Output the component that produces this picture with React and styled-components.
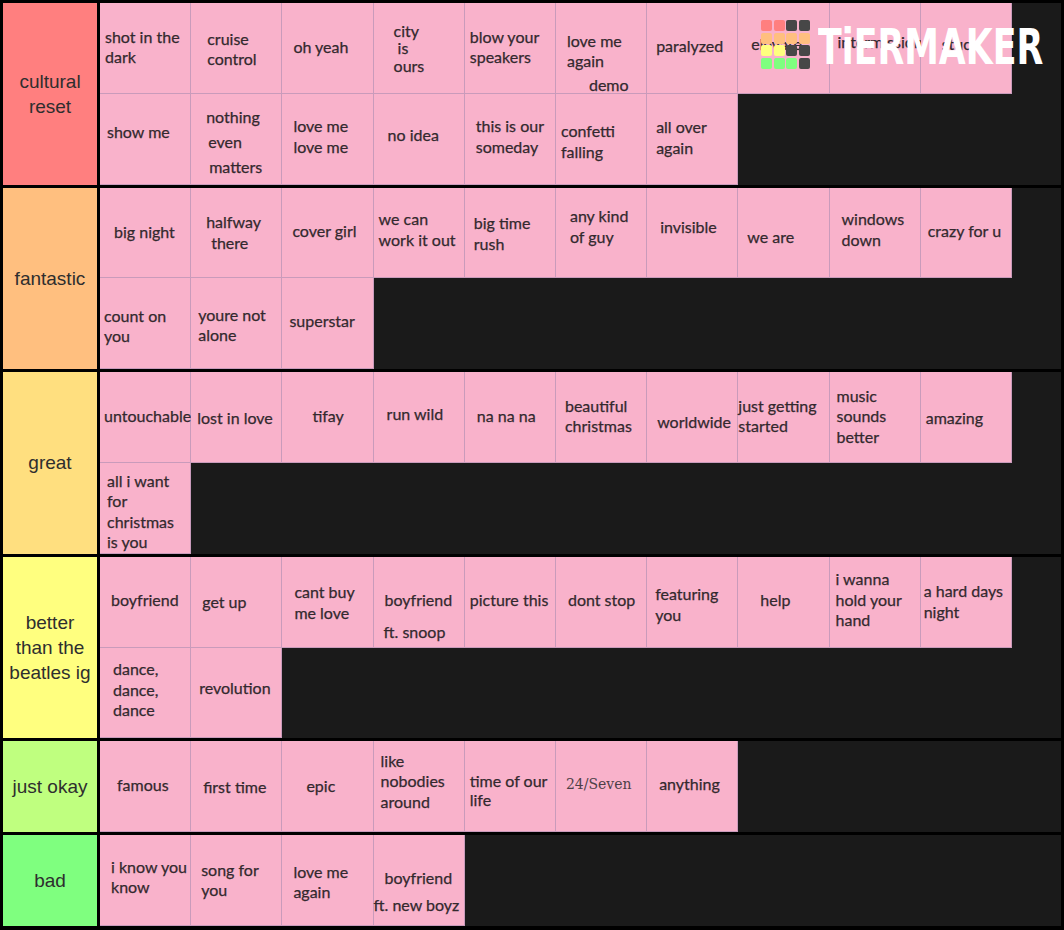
import React from 'react'
import styled, { createGlobalStyle } from 'styled-components'

const GlobalStyle = createGlobalStyle`
  html, body {
    margin: 0;
    padding: 0;
    background: #000;
    width: 1064px;
    height: 930px;
    overflow: hidden;
  }
`

const ROW_H = 90.8
const LH = 20.5
const BASE = 16.4

const tiers = [
  {
    label: 'cultural\nreset',
    color: '#ff7f7f',
    rows: 2,
    items: [
      { t: 'shot in the\ndark', x: 5, y: 40 },
      { t: 'cruise\ncontrol', x: 16, y: 42 },
      { t: 'oh yeah', x: 11, y: 50 },
      { t: 'city\nis\nours', x: 20, y: 35, lh: 17.5, ind: [0, 4, 0] },
      { t: 'blow your\nspeakers', x: 5, y: 40 },
      { t: 'love me\nagain\ndemo', x: 11, y: 44, ind: [0, 0, 22], gap: [0, 20, 24] },
      { t: 'paralyzed', x: 9, y: 49 },
      { t: 'elevate', x: 13, y: 47 },
      { t: 'intermission', x: 8, y: 45 },
      { t: 'stuck', x: 21, y: 47 },
      { t: 'show me', x: 7, y: 45 },
      { t: 'nothing\neven\nmatters', x: 15, y: 27, lh: 25, ind: [0, 2, 3] },
      { t: 'love me\nlove me', x: 11, y: 39 },
      { t: 'no idea', x: 14, y: 48 },
      { t: 'this is our\nsomeday', x: 11, y: 39 },
      { t: 'confetti\nfalling', x: 5, y: 44 },
      { t: 'all over\nagain', x: 9, y: 40 }
    ]
  },
  {
    label: 'fantastic',
    color: '#ffbf7f',
    rows: 2,
    items: [
      { t: 'big night', x: 14, y: 51 },
      { t: 'halfway\nthere', x: 15, y: 41, ind: [0, 5] },
      { t: 'cover girl', x: 10, y: 50 },
      { t: 'we can\nwork it out', x: 5, y: 38 },
      { t: 'big time\nrush', x: 9, y: 42 },
      { t: 'any kind\nof guy', x: 14, y: 35 },
      { t: 'invisible', x: 13, y: 46 },
      { t: 'we are', x: 9, y: 56 },
      { t: 'windows\ndown', x: 12, y: 38 },
      { t: 'crazy for u', x: 7, y: 50 },
      { t: 'count on\nyou', x: 4, y: 44 },
      { t: 'youre not\nalone', x: 7, y: 43 },
      { t: 'superstar', x: 7, y: 49 }
    ]
  },
  {
    label: 'great',
    color: '#ffdf7f',
    rows: 2,
    items: [
      { t: 'untouchable', x: 4, y: 50 },
      { t: 'lost in love', x: 6, y: 52 },
      { t: 'tifay', x: 30, y: 50 },
      { t: 'run wild', x: 13, y: 48 },
      { t: 'na na na', x: 12, y: 50 },
      { t: 'beautiful\nchristmas', x: 9, y: 40 },
      { t: 'worldwide', x: 10, y: 56 },
      { t: 'just getting\nstarted', x: 0, y: 40 },
      { t: 'music\nsounds\nbetter', x: 7, y: 30 },
      { t: 'amazing', x: 5, y: 52 },
      { t: 'all i want\nfor\nchristmas\nis you', x: 7, y: 24 }
    ]
  },
  {
    label: 'better\nthan the\nbeatles ig',
    color: '#ffff7f',
    rows: 2,
    items: [
      { t: 'boyfriend', x: 11, y: 50 },
      { t: 'get up', x: 11, y: 52 },
      { t: 'cant buy\nme love', x: 12, y: 42 },
      { t: 'boyfriend\nft. snoop', x: 11, y: 50, ind: [0, -1], gap: [0, 32] },
      { t: 'picture this', x: 5, y: 50 },
      { t: 'dont stop', x: 12, y: 50 },
      { t: 'featuring\nyou', x: 8, y: 44 },
      { t: 'help', x: 22, y: 50 },
      { t: 'i wanna\nhold your\nhand', x: 6, y: 29 },
      { t: 'a hard days\nnight', x: 3, y: 41 },
      { t: 'dance,\ndance,\ndance', x: 13, y: 28 },
      { t: 'revolution', x: 8, y: 47 }
    ]
  },
  {
    label: 'just okay',
    color: '#bfff7f',
    rows: 1,
    items: [
      { t: 'famous', x: 17, y: 50 },
      { t: 'first time', x: 12, y: 52 },
      { t: 'epic', x: 24, y: 51 },
      { t: 'like\nnobodies\naround', x: 7, y: 26 },
      { t: 'time of our\nlife', x: 5, y: 46, lh: 19 },
      { t: '24/Seven', x: 10, y: 48, serif: true },
      { t: 'anything', x: 12, y: 49 }
    ]
  },
  {
    label: 'bad',
    color: '#7fff7f',
    rows: 1,
    items: [
      { t: 'i know you\nknow', x: 11, y: 38 },
      { t: 'song for\nyou', x: 10, y: 41 },
      { t: 'love me\nagain', x: 11, y: 43 },
      { t: 'boyfriend\nft. new boyz', x: 11, y: 49, ind: [0, -11], gap: [0, 27] }
    ]
  }
]

const logoSquares = [
  '#ff7f7f', '#ff7f7f', '#474747', '#474747',
  '#ffbf7f', '#ffbf7f', '#ffbf7f', '#ffbf7f',
  '#ffff7f', '#ffff7f', '#474747', '#474747',
  '#7fff7f', '#7fff7f', '#7fff7f', '#474747'
]

const TierItem = ({ item }) => {
  const lh = item.lh || LH
  const lines = item.t.split('\n')
  return (
    <Cell $x={item.x} $y={item.y} $serif={item.serif}>
      {lines.map((line, i) => (
        <Line
          key={i}
          $lh={lh}
          $dx={item.ind ? item.ind[i] : 0}
          $gap={i > 0 && item.gap ? item.gap[i] - lh : 0}
        >
          {line}
        </Line>
      ))}
    </Cell>
  )
}

const App = () => {
  return (
    <>
      <GlobalStyle />
      <Board>
        {tiers.map(tier => (
          <Tier key={tier.label} $rows={tier.rows}>
            <Label $color={tier.color}>{tier.label}</Label>
            <Items>
              {tier.items.map((item, i) => (
                <TierItem key={i} item={item} />
              ))}
            </Items>
          </Tier>
        ))}
        <Logo>
          <Squares>
            {logoSquares.map((c, i) => (
              <Square key={i} $color={c} />
            ))}
          </Squares>
          <Word>TiERMAKER</Word>
        </Logo>
      </Board>
    </>
  )
}

const Board = styled.div`
  position: relative;
  box-sizing: border-box;
  width: 1064px;
  height: 930px;
  padding: 3px;
  background: #000;
  display: flex;
  flex-direction: column;
  gap: 3px;
  overflow: hidden;
`

const Tier = styled.div`
  display: flex;
  gap: 3px;
  flex: none;
  height: ${p => p.$rows * ROW_H}px;
`

const Label = styled.div`
  flex: none;
  width: 94px;
  background: ${p => p.$color};
  display: flex;
  align-items: center;
  justify-content: center;
  text-align: center;
  white-space: pre-line;
  font-family: 'Liberation Sans', Arial, sans-serif;
  font-size: 19px;
  line-height: 25px;
  color: #2e2e2e;
`

const Items = styled.div`
  flex: 1;
  background: #1a1a1a;
  display: grid;
  grid-template-columns: repeat(10, 91.2px);
  grid-auto-rows: ${ROW_H}px;
  align-content: start;
`

const Cell = styled.div`
  box-sizing: border-box;
  background: #f9b2cb;
  box-shadow: inset -1px -1px 0 #c99bbb;
  padding-left: ${p => p.$x}px;
  padding-top: ${p => p.$y - (p.$serif ? 15 : BASE)}px;
  font-family: ${p => (p.$serif ? "'DejaVu Serif', serif" : "Lato, 'Open Sans', sans-serif")};
  font-size: ${p => (p.$serif ? '14px' : '16px')};
  color: ${p => (p.$serif ? '#4e4148' : '#33292e')};
  -webkit-text-stroke: ${p => (p.$serif ? '0' : '0.25px')} #33292e;
  white-space: nowrap;
`

const Line = styled.div`
  line-height: ${p => p.$lh}px;
  margin-left: ${p => p.$dx}px;
  margin-top: ${p => p.$gap}px;
`

const Logo = styled.div`
  position: absolute;
  top: 20px;
  left: 761px;
  display: flex;
  align-items: flex-start;
  gap: 8.5px;
`

const Squares = styled.div`
  display: grid;
  grid-template-columns: repeat(4, 11px);
  grid-auto-rows: 11px;
  gap: 1.5px;
`

const Square = styled.div`
  background: ${p => p.$color};
  border-radius: 2px;
`

const Word = styled.div`
  margin-top: 2px;
  font-family: 'DejaVu Sans', sans-serif;
  font-weight: 700;
  font-size: 34.8px;
  line-height: 34.8px;
  color: #fff;
  white-space: nowrap;
  transform: scaleY(1.45);
  transform-origin: left top;
`

export default App
